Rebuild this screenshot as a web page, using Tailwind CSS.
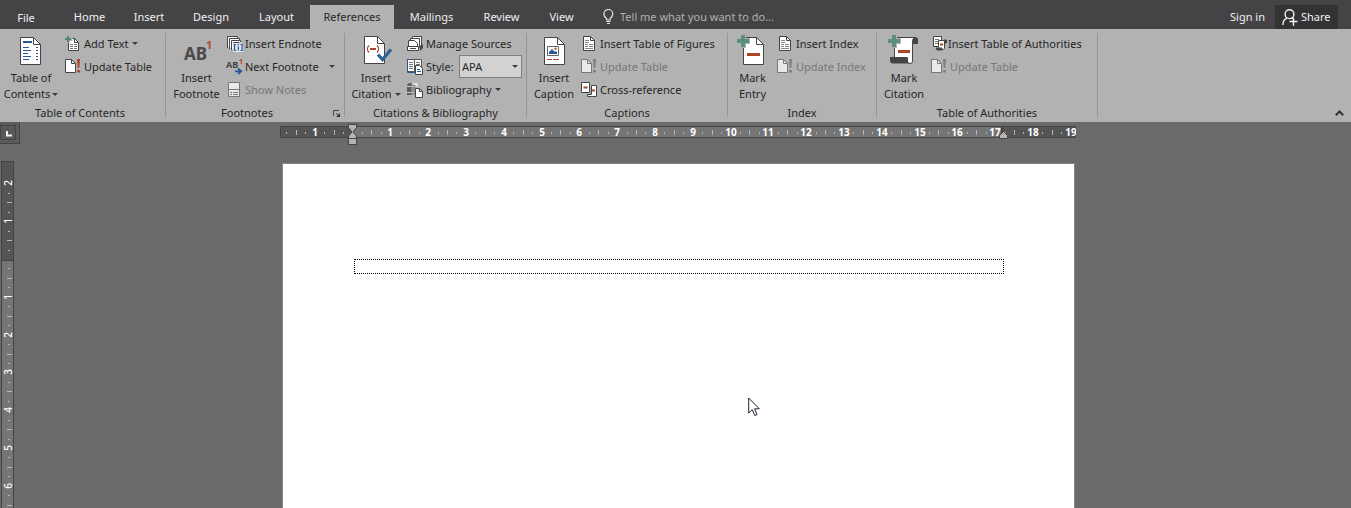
<!DOCTYPE html>
<html lang="en">
<head>
<meta charset="utf-8">
<title>Document editor</title>
<script src="https://cdn.jsdelivr.net/npm/@tailwindcss/browser@4"></script>
</head>
<body class="flex h-screen flex-col overflow-hidden bg-[#6a6a6a] font-['Noto_Sans','Open_Sans',sans-serif] text-[11px] leading-4 text-[#262626]">

<!-- Shared icon shapes -->
<svg width="0" height="0" class="absolute" aria-hidden="true">
  <symbol id="caret" viewBox="0 0 6 3"><path d="M0 0h6L3 3z" fill="#3c3c3c"/></symbol>
  <symbol id="doc" viewBox="0 0 16 16">
    <path d="M2.5.5h7l4 4v10h-11z" fill="#fff" stroke="#444"/><path d="M9.5.5v4h4" fill="none" stroke="#444"/>
    <path d="M4 4.5h4M4 6.5h4M4 8.5h3M8 8.5h4M4 10.5h3M8 10.5h4M4 12.5h8" stroke="#888"/>
  </symbol>
  <symbol id="update-off" viewBox="0 0 16 16">
    <path d="M.5.5h6l4 4v9H.5z" fill="#e9e9e9" stroke="#777"/><path d="M6.5.5v4h4" fill="none" stroke="#777"/>
    <path d="M12 0h3l-.7 9h-1.6zM12 11h3v2.5h-3z" fill="#808080"/>
  </symbol>
</svg>

<header class="flex h-[29px] shrink-0 items-end bg-[#444446] text-[#f0f0f0]">
  <nav class="flex h-6 text-center" aria-label="Ribbon tabs">
    <button class="w-[52px] pt-0.5">File</button>
    <button class="ml-2 w-[59px]">Home</button>
    <button class="w-[60px]">Insert</button>
    <button class="w-16">Design</button>
    <button class="w-[67px]">Layout</button>
    <button class="w-[84px] bg-[#b2b2b2] text-[#262626]">References</button>
    <button class="w-[75px]">Mailings</button>
    <button class="w-[65px]">Review</button>
    <button class="w-[55px]">View</button>
  </nav>
  <label class="ml-3.5 flex h-6 items-center gap-1.5">
    <svg width="11" height="16" viewBox="0 0 11 16" fill="none" stroke="#e6e6e6"><path d="M3.5 11V9.5C1.6 8 .8 6.8.8 5a4.5 4.5 0 0 1 9 0c0 1.8-.8 3-2.700 4.500V11z" stroke-width="1.2"/><path d="M3.5 12.5h4M4 14.5h3"/></svg>
    <input class="w-44 bg-transparent outline-none placeholder:text-[#b0b0b0]" placeholder="Tell me what you want to do..." aria-label="Tell me what you want to do">
  </label>
  <div class="mr-[13px] ml-auto flex h-6 items-center gap-2.5">
    <a href="#">Sign in</a>
    <button class="flex h-full w-[63px] items-center gap-[3px] bg-[#333334] pl-[7px]">
      <svg width="16" height="17" viewBox="0 0 16 17" fill="none" stroke="#f2f2f2" stroke-width="1.4"><circle cx="7.5" cy="5.2" r="4.4"/><path d="M.8 16c.2-4 2-6 4.400-6.800"/><path d="M9.600 9l1 .8M7.500 12.500h8M11.500 8.700v8"/></svg>
      Share
    </button>
  </div>
</header>

<section class="flex h-[93px] shrink-0 bg-[#b2b2b2] pt-1" aria-label="References ribbon">

  <div class="flex h-[84px] w-[166px] shrink-0 flex-col border-r border-[#949494]">
    <div class="flex h-[72px]">
      <button class="flex w-[62px] flex-col items-center pt-[3px]">
        <svg class="mb-0.5 shrink-0 overflow-visible" width="32" height="32" viewBox="0 0 32 32"><path d="M5.500 1.500h13l7 7v20h-20z" fill="#fff" stroke="#444"/><path d="M18.500 1.500v7h7" fill="none" stroke="#444"/><path d="M8 6h9" stroke="#2b579a" stroke-width="2"/><path d="M8 11.500h6M8 14.500h8M8 17.500h5M8 20.500h8M8 23.500h6M21 11.500h2M21 14.500h2M21 17.500h2M21 20.500h2M21 23.500h2" stroke="#2b579a"/></svg>
        <span>Table of</span>
        <span class="flex items-center gap-0.5 whitespace-nowrap">Contents<svg width="6" height="3"><use href="#caret"/></svg></span>
      </button>
      <div class="-mt-px flex flex-col items-start pl-[3px]">
        <button class="flex h-[23px] items-center gap-[3px]">
          <svg width="16" height="16" viewBox="0 0 16 16"><path d="M3.500 2.500h6l4 4v8h-10z" fill="#fff" stroke="#444"/><path d="M9.500 2.500v4h4" fill="none" stroke="#444"/><path d="M5 8.500h3M9 8.500h3M5 10.500h3M9 10.500h3M5 12.500h3M9 12.500h3" stroke="#777"/><path d="M0 3h7.500M3 0v7" stroke="#b2b2b2" stroke-width="4"/><path d="M0 3h6M3 0v6" stroke="#4f8872" stroke-width="2"/></svg>
          Add Text<svg width="6" height="3"><use href="#caret"/></svg></button>
        <button class="flex h-[23px] items-center gap-[3px]">
          <svg width="16" height="16" viewBox="0 0 16 16"><path d="M.5.5h6l4 4v9H.5z" fill="#fff" stroke="#444"/><path d="M6.500.5v4h4" fill="none" stroke="#444"/><path d="M12 0h3l-.7 9h-1.600zM12 11h3v2.500h-3z" fill="#b0472c"/></svg>
          Update Table</button>
      </div>
    </div>
    <h2 class="h-3 pr-[5px] text-center">Table of Contents</h2>
  </div>

  <div class="flex h-[84px] w-[179px] shrink-0 flex-col border-r border-[#949494]">
    <div class="flex h-[72px]">
      <button class="flex w-[61px] flex-col items-center pt-[3px]">
        <svg class="mb-0.5 shrink-0" width="32" height="32" viewBox="0 0 32 32" font-weight="700"><text x="3" y="24" font-size="17" fill="#4a4a4a">AB</text><text x="25" y="13" font-size="11" fill="#b0472c">1</text></svg>
        <span>Insert</span><span>Footnote</span>
      </button>
      <div class="-mt-px flex grow flex-col">
        <button class="flex h-[23px] items-center gap-0.5">
          <svg width="16" height="16" viewBox="0 0 16 16" fill="#fff" stroke="#444"><path d="M.5 12V.5h10V2"/><path d="M2.500 13V2.500h10V4"/><path d="M4.500 14V4.500h9V6"/><path d="M6 6h7l3 3v7H6z" stroke="none" fill="#dfe5ee"/><path d="M6.500 7V6.500h6" fill="none"/><path d="M9 8.500H7.500v6H9M13.500 8.500H15v6h-1.500M11.300 8v1.500M11.300 10.500v4" fill="none" stroke="#2b579a" stroke-width="1.200"/></svg>
          Insert Endnote</button>
        <div class="flex h-[23px] items-center justify-between pr-[9px]">
          <button class="flex items-center gap-0.5">
            <svg class="overflow-visible" width="16" height="16" viewBox="0 0 16 16"><text x="-1" y="9" font-size="9" font-weight="700" fill="#444">AB</text><text x="12" y="5" font-size="7" font-weight="700" fill="#b0472c">1</text><path d="M8 12.300h6M11 9.500l3.200 2.800-3.200 2.800" fill="none" stroke="#2b579a" stroke-width="1.800"/></svg>
            Next Footnote</button>
          <button aria-label="Footnote navigation"><svg width="6" height="3"><use href="#caret"/></svg></button>
        </div>
        <button class="flex h-[23px] items-center gap-0.5 text-[#777]" disabled>
          <svg width="16" height="16" viewBox="0 0 16 16"><path d="M1.500.5h11v14h-11z" fill="#e9e9e9" stroke="#777"/><path d="M1 7.500h12M3 10.500h2M6 10.500h5M3 12.500h2M6 12.500h5" stroke="#777"/></svg>
          Show Notes</button>
      </div>
    </div>
    <div class="flex h-3 items-start">
      <h2 class="grow pr-[5px] text-center">Footnotes</h2>
      <button class="mt-[5px] mr-[3px]" aria-label="Footnote settings"><svg class="block" width="8" height="8" viewBox="0 0 8 8"><path d="M.5 6V.5H6M3 3l3 3" fill="none" stroke="#444"/><path d="M7 3v4H3z" fill="#333"/></svg></button>
    </div>
  </div>

  <div class="flex h-[84px] w-[182px] shrink-0 flex-col border-r border-[#949494]">
    <div class="flex h-[72px]">
      <button class="flex w-[62px] flex-col items-center pt-[3px]">
        <svg class="mb-0.5 shrink-0 overflow-visible" width="32" height="32" viewBox="0 0 32 32"><path d="M4.500.5h13l7 7v20h-20z" fill="#fff" stroke="#444"/><path d="M17.500.5v7h7" fill="none" stroke="#444"/><path d="M9 9.500c-2 2-2 5 0 7M17 9.500c2 2 2 5 0 7" fill="none" stroke="#b0472c" stroke-width="1.300"/><path d="M10 13h6" stroke="#b0472c" stroke-width="2"/><path d="M18 18.500l4.500 5L31 13.500" fill="none" stroke="#2f6096" stroke-width="3.200"/></svg>
        <span>Insert</span>
        <span class="flex items-center gap-[3px]">Citation<svg width="6" height="3"><use href="#caret"/></svg></span>
      </button>
      <div class="-mt-px flex flex-col items-start">
        <button class="flex h-[23px] items-center gap-[3px]">
          <svg width="16" height="16" viewBox="0 0 16 16" fill="#fff" stroke="#444"><path d="M5.500 3V.5h9v10"/><path d="M3.500 5V2.500h9v9"/><path d="M1.500 10.500v-6h6l3 3v3z"/><path d="M.5 10.500h11v4H.5z"/><path d="M3 12.500h6"/><path d="M13 10l3-2v4l-3 3z" fill="#444" stroke="none"/></svg>
          Manage Sources</button>
        <div class="flex h-[23px] items-center">
          <svg width="16" height="16" viewBox="0 0 16 16"><path d="M.5.5h7v12h-7zM7.500.5h7v12h-7z" fill="#fff" stroke="#555"/><path d="M.5 0v13.500H8" fill="none" stroke="#2b579a"/><path d="M2 3.500h4M2 5.500h4M2 7.500h4M2 9.500h4M9 3.500h4M9 5.500h4" stroke="#777"/><path d="M8.500 6.500h4l3 3v6h-7z" fill="#fff" stroke="#444"/><path d="M10 10.500h3M10 12.500h4" stroke="#2b579a"/></svg>
          <label for="style" class="w-9 pl-[3px]">Style:</label>
          <span class="relative flex items-center">
            <select id="style" class="h-[23px] w-[63px] appearance-none border border-[#7f7f7f] bg-[#d2d2d2] pl-0.5 text-[11px]"><option>APA</option></select>
            <svg class="pointer-events-none absolute right-1" width="6" height="3"><use href="#caret"/></svg>
          </span>
        </div>
        <button class="flex h-[23px] items-center gap-[3px]">
          <svg width="16" height="16" viewBox="0 0 16 16"><path d="M0 3l2-2h3L4 3v10H0z" fill="#5c5c5c"/><path d="M4 3l2-2h4L8.500 3v10H4z" fill="#8f8a82"/><path d="M6 1h5v3L8.500 5V3L5 2.500z" fill="#e4dfd6"/><path d="M0 4.500h4M0 10.500h4M5 4.500h2M5 10.500h2" stroke="#d0d0d0"/><path d="M8.500 6.500h4l3 3v6h-7z" fill="#fff" stroke="#444"/><path d="M12.500 6.500v3h3" fill="none" stroke="#444"/></svg>
          Bibliography<svg width="6" height="3"><use href="#caret"/></svg></button>
      </div>
    </div>
    <h2 class="h-3 text-center">Citations &amp; Bibliography</h2>
  </div>

  <div class="flex h-[84px] w-[201px] shrink-0 flex-col border-r border-[#949494]">
    <div class="flex h-[72px]">
      <button class="flex w-[54px] flex-col items-center pt-[3px]">
        <svg class="mb-0.5 shrink-0" width="32" height="32" viewBox="0 0 32 32"><path d="M6.500 1.500h13l7 7v20h-20z" fill="#fff" stroke="#444"/><path d="M19.500 1.500v7h7" fill="none" stroke="#444"/><path d="M9.500 10.500h11v9h-11z" fill="#fff" stroke="#666"/><path d="M11 18v-2l3-3 3 3 1-1 1 1v2z" fill="#2b579a"/><circle cx="17.500" cy="12.800" r="1.200" fill="#c55a11"/><path d="M9 23.500h5M15 23.500h6" stroke="#b0472c"/></svg>
        <span>Insert</span><span>Caption</span>
      </button>
      <div class="-mt-px flex flex-col items-start">
        <button class="flex h-[23px] items-center gap-[3px]"><svg width="16" height="16"><use href="#doc"/></svg>Insert Table of Figures</button>
        <button class="flex h-[23px] items-center gap-[3px] text-[#777]" disabled><svg width="16" height="16"><use href="#update-off"/></svg>Update Table</button>
        <button class="flex h-[23px] items-center gap-[3px]">
          <svg width="16" height="16" viewBox="0 0 16 16" fill="#fff" stroke="#444"><path d="M.5.5h8v10h-8zM10.500 3.500h5v11h-9v-2h4z"/><path d="M2.500 5.500h4M11 8.500h3" stroke="#b0472c" stroke-width="2"/></svg>
          Cross-reference</button>
      </div>
    </div>
    <h2 class="h-3 text-center">Captions</h2>
  </div>

  <div class="flex h-[84px] w-[149px] shrink-0 flex-col border-r border-[#949494]">
    <div class="flex h-[72px]">
      <button class="flex w-[49px] flex-col items-center pt-[3px]">
        <svg class="mb-0.5 shrink-0 overflow-visible" width="32" height="32" viewBox="0 0 32 32"><path d="M6.500 1.500h13l7 7v20h-20z" fill="#fff" stroke="#444"/><path d="M19.500 1.500v7h7" fill="none" stroke="#444"/><path d="M0 5h13M6 0v12" stroke="#b2b2b2" stroke-width="6"/><path d="M0 5h12M6-1v12" stroke="#5a8f7b" stroke-width="4"/><path d="M10 18.500h13" stroke="#a8452b" stroke-width="3"/></svg>
        <span>Mark</span><span>Entry</span>
      </button>
      <div class="-mt-px flex flex-col items-start">
        <button class="flex h-[23px] items-center gap-[3px]"><svg width="16" height="16"><use href="#doc"/></svg>Insert Index</button>
        <button class="flex h-[23px] items-center gap-[3px] text-[#777]" disabled><svg width="16" height="16"><use href="#update-off"/></svg>Update Index</button>
      </div>
    </div>
    <h2 class="h-3 text-center">Index</h2>
  </div>

  <div class="flex h-[84px] w-[221px] shrink-0 flex-col border-r border-[#949494]">
    <div class="flex h-[72px]">
      <button class="flex w-[54px] flex-col items-center pt-[3px]">
        <svg class="mb-0.5 shrink-0 overflow-visible" width="32" height="32" viewBox="0 0 32 32"><path d="M22 1h5q3 0 3 3v4h-6z" fill="#444"/><path d="M6.500 22V1.500h20q-2 1-2 4v20q0 2-2.500 2t-2.500-2v-4z" fill="#fff" stroke="#444"/><path d="M2 21h17q-1 3 2 6.500H5q-3 0-3-3.500z" fill="#444"/><path d="M0 5h13M6 0v12" stroke="#b2b2b2" stroke-width="6"/><path d="M0 5h12M6-1v12" stroke="#5a8f7b" stroke-width="4"/><path d="M10 15.500h12" stroke="#a8452b" stroke-width="3"/></svg>
        <span>Mark</span><span>Citation</span>
      </button>
      <div class="-mt-px flex flex-col items-start">
        <button class="flex h-[23px] items-center gap-px pl-0.5 whitespace-nowrap">
          <svg width="14" height="16" viewBox="0 0 14 16" fill="#fff" stroke="#444"><path d="M.5.5h8v10h-8z"/><path d="M2 3.500h4M2 5.500h3M2 7.500h3" stroke="#777"/><path d="M11 4h2.500v3H12z" fill="#444"/><path d="M5.500 11V4.500h6v8q0 1-2 1"/><path d="M3 12h6v2H4z" fill="#444"/><path d="M7 8.500h3" stroke="#b0472c" stroke-width="2"/></svg>
          Insert Table of Authorities</button>
        <button class="flex h-[23px] items-center gap-[3px] text-[#777]" disabled><svg width="16" height="16"><use href="#update-off"/></svg>Update Table</button>
      </div>
    </div>
    <h2 class="h-3 text-center">Table of Authorities</h2>
  </div>

  <button class="mt-auto mr-[7px] mb-1.5 ml-auto" aria-label="Collapse the ribbon"><svg class="block" width="9" height="6" viewBox="0 0 9 6"><path d="M.8 5.200L4.500 1.500l3.700 3.700" fill="none" stroke="#333" stroke-width="2"/></svg></button>
</section>

<main class="relative grid min-h-0 grow grid-cols-[14px_1fr] grid-rows-[39px_1fr]">
  <button class="flex h-[22px] w-5 items-center border-r border-b border-[#444] bg-[#5c5c5c]" aria-label="Tab stop type">
    <svg width="17" height="16" viewBox="0 0 17 16"><path d="M.5.5h15v14H.5z" fill="#585858" stroke="#444"/><path d="M7 6v4.500h5" fill="none" stroke="#f0f0f0" stroke-width="2"/></svg>
  </button>
  <div class="flex justify-center pt-0.5 pr-2.5"><svg id="hruler" width="796" height="24" class="text-[10px] font-bold"></svg></div>
  <div class="overflow-hidden"><svg id="vruler" width="14" height="360" class="block text-[10px] font-medium"></svg></div>
  <div class="flex justify-center pt-0.5 pr-2">
    <article class="w-[793px] border border-b-0 border-[#868686] bg-white pt-[95px] pr-[70px] pl-[71px]">
      <div class="h-[15px] w-full border border-dotted border-black" contenteditable="true" role="textbox" aria-label="Document header"></div>
    </article>
  </div>
  <svg class="pointer-events-none absolute top-[275px] left-[748px]" width="13" height="20" viewBox="0 0 13 20" aria-hidden="true"><path d="M.7 1v15l3.500-3.300 2.600 5.800 2.300-1-2.600-5.700h4.800z" fill="#fff" stroke="#223" stroke-width="1"/></svg>
</main>

<script>
const NS = 'http://www.w3.org/2000/svg';
const CM = 37.8;
function el(parent, tag, attrs, text) {
  const e = document.createElementNS(NS, tag);
  for (const k in attrs) e.setAttribute(k, attrs[k]);
  if (text) e.textContent = text;
  parent.append(e);
}

// Horizontal ruler: margins are dark, the text area is lighter.
const h = document.getElementById('hruler');
el(h, 'rect', {x: .5, y: 2.5, width: 795, height: 11, fill: '#555', stroke: '#444'});
el(h, 'rect', {x: 72, y: 3, width: 651, height: 10, fill: '#757575'});
el(h, 'rect', {x: 721, y: 3, width: 2, height: 10, fill: '#444'});
for (let q = -7; q <= 76; q++) {
  const x = Math.round(72.5 + q * CM / 4);
  if (q === 0) continue;
  if (q % 4 === 0) el(h, 'text', {x: x, y: 12, fill: '#fff', 'text-anchor': 'middle'}, String(Math.abs(q / 4)));
  else if (q % 2 === 0) el(h, 'rect', {x: x, y: 6, width: 1, height: 5, fill: '#b5b5b5'});
  else el(h, 'rect', {x: x, y: 8, width: 1, height: 2, fill: '#b5b5b5'});
}
el(h, 'path', {d: 'M68.500.5h8v3L73 8l3.500 4v2.500h-8V12L72 8l-3.500-4.500z', fill: '#b5b5b5', stroke: '#444'});
el(h, 'rect', {x: 68.5, y: 14.5, width: 8, height: 6, fill: '#b5b5b5', stroke: '#444'});
el(h, 'path', {d: 'M719.500 14.500v-3l4-4 4 4v3z', fill: '#b5b5b5', stroke: '#444'});

// Vertical ruler
const v = document.getElementById('vruler');
el(v, 'rect', {x: 1.5, y: .5, width: 12, height: 400, fill: '#757575', stroke: '#444'});
el(v, 'rect', {x: 2, y: 1, width: 11, height: 99, fill: '#555'});
el(v, 'rect', {x: 2, y: 99, width: 11, height: 1, fill: '#444'});
for (let q = -8; q <= 35; q++) {
  const y = Math.round(98 + q * CM / 4);
  if (q === 0) continue;
  if (q % 4 === 0) el(v, 'text', {transform: `translate(12 ${y}) rotate(-90)`, fill: '#fff', 'text-anchor': 'middle'}, String(Math.abs(q / 4)));
  else if (q % 2 === 0) el(v, 'rect', {x: 7, y: y, width: 5, height: 1, fill: '#b5b5b5'});
  else el(v, 'rect', {x: 8, y: y, width: 2, height: 1, fill: '#b5b5b5'});
}
</script>
</body>
</html>
